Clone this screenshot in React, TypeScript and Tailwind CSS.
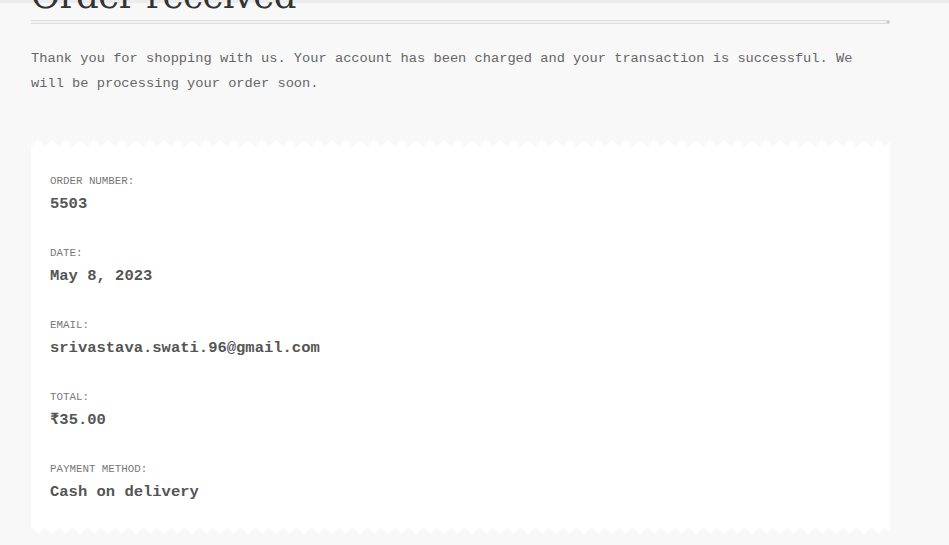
import React from 'react'

const details = [
    { label: 'Order number:', value: '5503' },
    { label: 'Date:', value: 'May 8, 2023' },
    { label: 'Email:', value: 'srivastava.swati.96@gmail.com' },
    { label: 'Total:', value: '₹35.00' },
    { label: 'Payment method:', value: 'Cash on delivery' },
]

// zigzag edge of the receipt, drawn as a repeating svg pattern
function Zigzag({ id, flip }: { id: string; flip?: boolean }) {
    return (
        <svg className="block w-full h-[7px]" preserveAspectRatio="none">
            <defs>
                <pattern id={id} width="14" height="7" patternUnits="userSpaceOnUse">
                    <path d={flip ? 'M0 0 L7 7 L14 0 Z' : 'M0 7 L7 0 L14 7 Z'} fill="#ffffff" />
                </pattern>
            </defs>
            <rect width="100%" height="7" fill={`url(#${id})`} />
        </svg>
    )
}

export default function App() {
    return (
        <div className="bg-[#f8f8f8] w-[949px] h-[545px] overflow-hidden font-['Liberation_Mono',monospace]">
            <div className="bg-[#ececec] h-[3px]" />

            <div className="pl-[31px] w-[890px]">
                {/* Title */}
                <h1 className="-mt-[27px] font-['DejaVu_Serif',serif] text-[#333] text-[35.5px] leading-[40px] tracking-[-0.5px]">
                    Order received
                </h1>
                <div className="flex items-center mt-[4px]">
                    <div className="flex-1 bg-[#f3f3f3] border-[#dcdcdc] border-y h-[4px]" />
                    <div className="bg-[#cfcfcf] rounded-full w-[4px] h-[4px]" />
                </div>

                <p className="mt-[22px] text-[#666] text-[13.7px] leading-[25px]">
                    Thank you for shopping with us. Your account has been charged and your transaction is successful. We will be processing your order soon.
                </p>

                {/* Receipt */}
                <div className="mt-[44px]">
                    <Zigzag id="zz-top" />
                    <ul className="bg-white px-[19px] pt-[27px] pb-[25px]">
                        {details.map((d, i) => (
                            <li key={d.label} className={i > 0 ? 'mt-[32px]' : ''}>
                                <div className="text-[#777] text-[10.8px] uppercase leading-[14px]">{d.label}</div>
                                <div className="mt-[6px] font-bold text-[#555] text-[15.5px] leading-[20px]">{d.value}</div>
                            </li>
                        ))}
                    </ul>
                    <Zigzag id="zz-bottom" flip />
                </div>
            </div>
        </div>
    )
}
